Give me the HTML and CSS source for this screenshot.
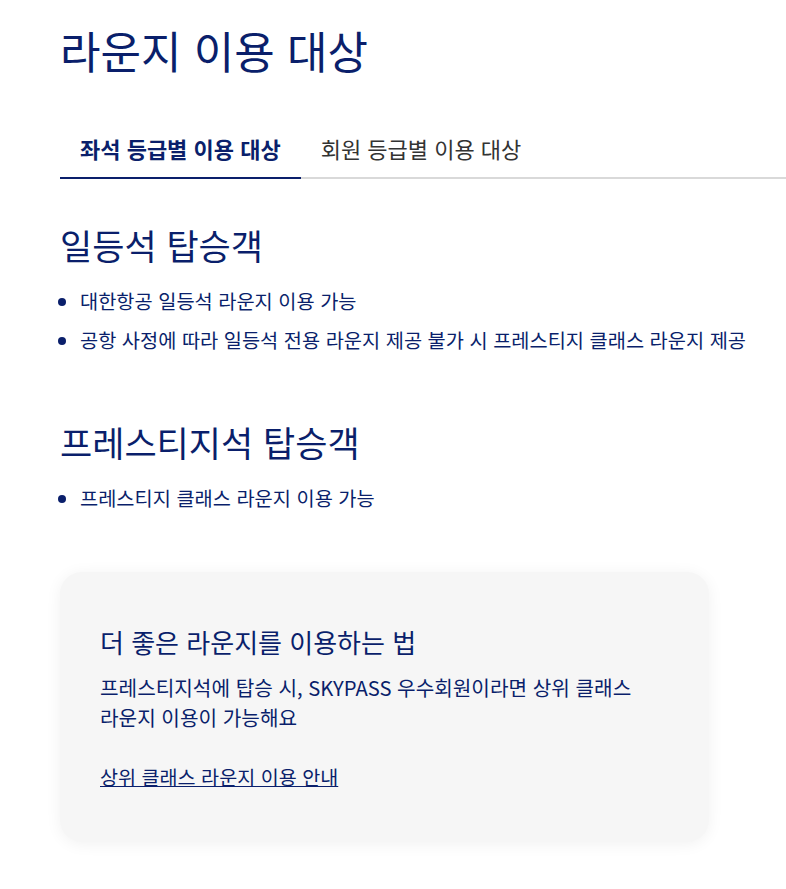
FILE: index.html
```html
<!DOCTYPE html>
<html lang="ko">
  <head>
    <meta charset="UTF-8" />
    <meta name="viewport" content="width=device-width, initial-scale=1.0" />
    <title>라운지 이용 대상</title>
    <link rel="stylesheet" href="styles.css">
  </head>
  <body>
    <div class="page">
      <h1 class="title">라운지 이용 대상</h1>

      <div class="tabs">
        <button class="tab active">좌석 등급별 이용 대상</button>
        <button class="tab">회원 등급별 이용 대상</button>
      </div>

      <section class="group">
        <h2>일등석 탑승객</h2>
        <ul>
          <li>대한항공 일등석 라운지 이용 가능</li>
          <li>공항 사정에 따라 일등석 전용 라운지 제공 불가 시 프레스티지 클래스 라운지 제공</li>
        </ul>
      </section>

      <section class="group">
        <h2>프레스티지석 탑승객</h2>
        <ul>
          <li>프레스티지 클래스 라운지 이용 가능</li>
        </ul>
      </section>

      <div class="tip">
        <h3>더 좋은 라운지를 이용하는 법</h3>
        <p>프레스티지석에 탑승 시, SKYPASS 우수회원이라면 상위 클래스<br />라운지 이용이 가능해요</p>
        <a href="#">상위 클래스 라운지 이용 안내</a>
      </div>
    </div>
  </body>
</html>
```

FILE: styles.css
```css
body {
  margin: 0;
  font-family: "Noto Sans CJK KR", "Noto Sans", sans-serif;
  color: #0a1f6b;
  background: #fff;
}
.page {
  padding: 20px 0 40px 60px;
}
.title {
  margin: 0;
  font-size: 44px;
  font-weight: 400;
  line-height: 60px;
}
.tabs {
  display: flex;
  margin-top: 43px;
  border-bottom: 2px solid #d9d9d9;
}
.tab {
  padding: 10px 20px 14px;
  margin-bottom: -2px;
  border: none;
  border-bottom: 2px solid transparent;
  background: none;
  font-family: inherit;
  font-size: 22px;
  line-height: 30px;
  color: #333;
  cursor: pointer;
}
.tab.active {
  font-weight: 700;
  color: #0a1f6b;
  border-bottom-color: #0a1f6b;
}
.group {
  margin-top: 43px;
}
.group + .group {
  margin-top: 65px;
}
.group h2 {
  margin: 0;
  font-size: 35px;
  font-weight: 400;
  line-height: 46px;
}
.group ul {
  margin: 19px 0 0;
  padding: 0 0 0 20px;
}
.group li {
  font-size: 19.75px;
  line-height: 28px;
}
.group li + li {
  margin-top: 11px;
}
.tip {
  width: 569px;
  margin-top: 60px;
  padding: 52px 40px 52px;
  border-radius: 22px;
  background: #f6f6f6;
  box-shadow: 0 2px 16px rgba(0, 0, 0, 0.06);
}
.tip h3 {
  margin: 0;
  font-size: 26px;
  font-weight: 400;
  line-height: 36px;
}
.tip p {
  margin: 13px 0 0;
  font-size: 20.2px;
  line-height: 30px;
}
.tip a {
  display: inline-block;
  margin-top: 31px;
  font-size: 19.6px;
  line-height: 26px;
  color: #0a1f6b;
}
```
